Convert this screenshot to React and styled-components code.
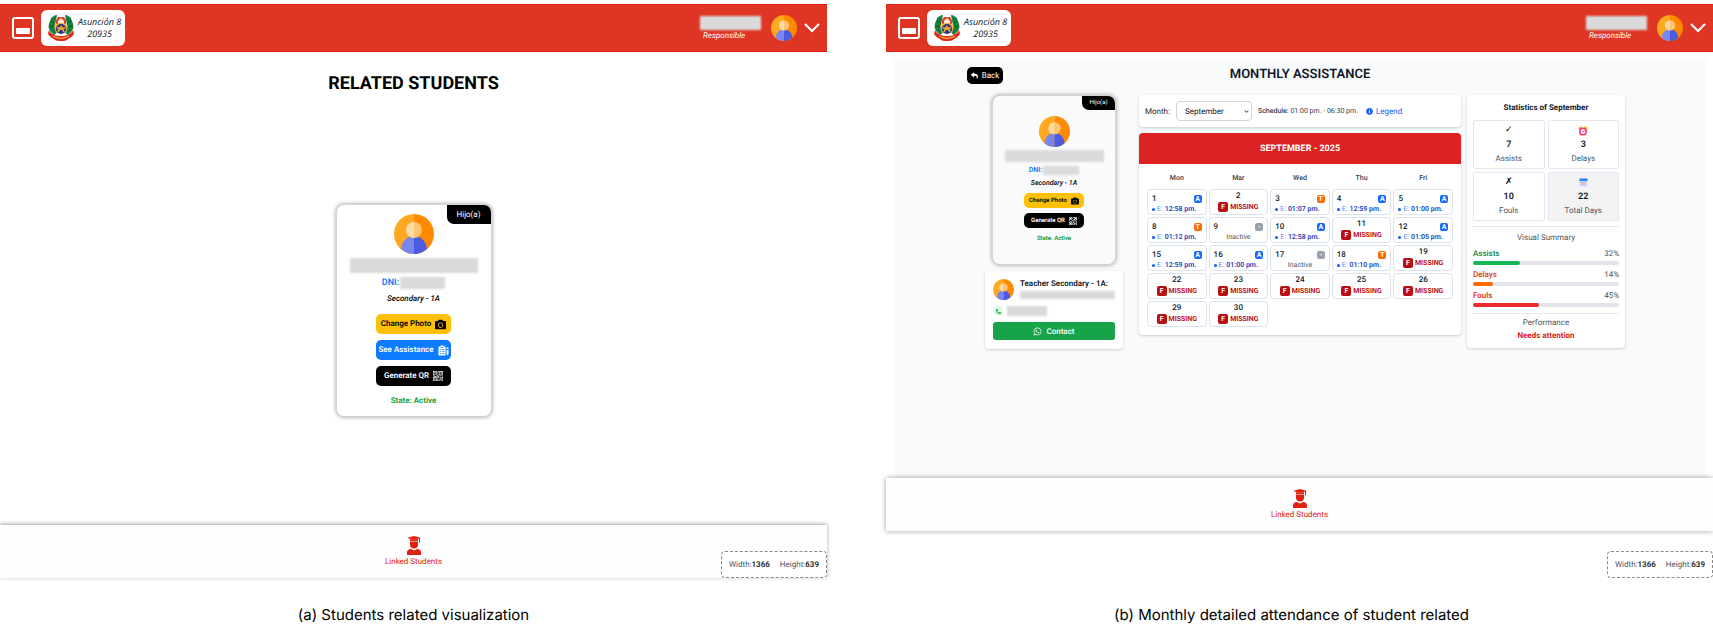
import React, { useState } from "react";
import styled, { createGlobalStyle, css } from "styled-components";
import {
  FaCamera,
  FaChevronDown,
  FaInfoCircle,
  FaPhoneAlt,
  FaReply,
  FaWhatsapp,
} from "react-icons/fa";
import { BsQrCode } from "react-icons/bs";

const week = (...days) => days;

const present = (day, time) => ({ day, kind: "A", time });
const late = (day, time) => ({ day, kind: "T", time });
const missing = (day) => ({ day, kind: "F" });
const inactive = (day) => ({ day, kind: "-" });

const WEEKDAYS = ["Mon", "Mar", "Wed", "Thu", "Fri"];

const WEEKS = [
  week(present(1, "12:58 pm."), missing(2), late(3, "01:07 pm."), present(4, "12:59 pm."), present(5, "01:00 pm.")),
  week(late(8, "01:12 pm."), inactive(9), present(10, "12:58 pm."), missing(11), present(12, "01:05 pm.")),
  week(present(15, "12:59 pm."), present(16, "01:00 pm."), inactive(17), late(18, "01:10 pm."), missing(19)),
  week(missing(22), missing(23), missing(24), missing(25), missing(26)),
  week(missing(29), missing(30)),
];

const SUMMARY = [
  { label: "Assists", value: 32, color: "#15803d", bar: "#16b755" },
  { label: "Delays", value: 14, color: "#d43a10", bar: "#ff6900" },
  { label: "Fouls", value: 45, color: "#dc2626", bar: "#ed2b2f" },
];

const BADGE_COLORS = { A: "#1769ff", T: "#ff6900", F: "#b80f14", "-": "#99a1af" };

const MenuIcon = () => (
  <svg width="22" height="22" viewBox="0 0 22 22" aria-hidden="true">
    <rect x="1" y="1" width="20" height="20" rx="2" fill="none" stroke="#fff" strokeWidth="2" />
    <rect x="4" y="11" width="14" height="6" rx="1" fill="#fff" />
  </svg>
);

const Crest = () => (
  <svg width="26" height="28" viewBox="0 0 26 28" aria-hidden="true">
    <path d="M9 1C6 1 5 3 3 4c0 2-2 4-2 6-1 3 0 5 1 7l4 4 4-3-3-7 1-5z" fill="#16803c" />
    <path d="M17 1c3 0 4 2 6 3 0 2 2 4 2 6 1 3 0 5-1 7l-4 4-4-3 3-7-1-5z" fill="#16803c" />
    <path d="M3 7l4 2M2 12l5 1M23 7l-4 2M24 12l-5 1" stroke="#0b5528" strokeWidth="1" />
    <path d="M8 6l2-3h6l2 3v6H8z" fill="#e2442b" />
    <path d="M10 7l3-3 3 3v5h-6z" fill="#f7ead0" />
    <path d="M6 12c2-4 12-4 14 0l-2 7H8z" fill="#f0b23e" />
    <circle cx="13" cy="15" r="5" fill="#27358a" />
    <path d="M9 14h8M10 18c1-4 5-4 6 0" fill="none" stroke="#f0b23e" strokeWidth="1.3" />
    <circle cx="13" cy="13" r="1.6" fill="#d98c2f" />
    <path d="M1 16c2 4 6 6 12 6s10-2 12-6l1 4c-2 3-4 4-6 5-2 2-4 2-7 2s-5 0-7-2c-2-1-4-2-6-5z" fill="#d92b20" />
    <path d="M5 22c5 3 11 3 16 0" fill="none" stroke="#f3b33d" strokeWidth="1.2" />
  </svg>
);

const AvatarIcon = ({ size }) => (
  <svg width={size} height={size} viewBox="0 0 40 40" role="img" aria-label="Avatar">
    <path d="M20 0a20 20 0 0 0 0 40z" fill="#ffa820" />
    <path d="M20 0a20 20 0 0 1 0 40z" fill="#ff8a00" />
    <path d="M7 35C8 26 14 22 20 22v18c-5 0-9.500-2-13-5z" fill="#7986ee" />
    <path d="M33 35c-1-9-7-13-13-13v18c5 0 9.500-2 13-5z" fill="#4b5ce0" />
    <path d="M20 8a8 8 0 0 0 0 16z" fill="#ffdba3" />
    <path d="M20 8a8 8 0 0 1 0 16z" fill="#ffc574" />
  </svg>
);

const StudentIcon = () => (
  <svg width="14" height="19" viewBox="0 0 28 38" fill="#e0200f" aria-hidden="true">
    <path d="M0 4l14-4 14 4-14 4z" />
    <path d="M6 6l8 2 8-2v4H6zM24 4h2v9h-2z" />
    <path d="M6 11h16v6a8 8 0 0 1-16 0z" />
    <path d="M0 38v-5c0-4 3-7 8-7l6 3 6-3c5 0 8 3 8 7v5z" />
  </svg>
);

const AssistanceIcon = () => (
  <svg width="11" height="11" viewBox="0 0 22 22" aria-hidden="true">
    <path d="M1 3h4V1h6v2h4v18H1z" fill="#fff" />
    <path d="M4 9h2m2 0h5M4 13h2m2 0h5M4 17h2m2 0h5M5 5h6" stroke="#0d7bff" strokeWidth="1.4" />
    <path d="M17 5h4v3h-4zM17 10h4v8l-2 3-2-3z" fill="#fff" />
  </svg>
);

const ChevronIcon = () => (
  <svg width="16" height="10" viewBox="0 0 16 10" aria-hidden="true">
    <path d="M1.500 1.500L8 8l6.500-6.500" fill="none" stroke="#fff" strokeWidth="2" strokeLinecap="round" />
  </svg>
);

const ClockIcon = () => (
  <svg width="10" height="10" viewBox="0 0 20 20" aria-hidden="true">
    <path d="M1 6l1-4 5-1 1 3-5 4zM19 6l-1-4-5-1-1 3 5 4z" fill="#ffad1f" />
    <circle cx="10" cy="11" r="6.500" fill="#ffe9ee" stroke="#f0366b" strokeWidth="3" />
    <path d="M8 10l2 2 3-3" fill="none" stroke="#8a4dd8" strokeWidth="1.400" />
    <path d="M5 17l-1 2M15 17l1 2" stroke="#f0366b" strokeWidth="2" />
  </svg>
);

const CalendarIcon = () => (
  <svg width="9" height="9" viewBox="0 0 18 18" aria-hidden="true">
    <rect x="1" y="1" width="16" height="16" rx="1" fill="#dcd5f6" />
    <path d="M1 1h16v5H1z" fill="#2684f5" />
    <path d="M4 9h2m1.500 0h2M11 9h2M4 12h2m1.500 0h2M11 12h2" stroke="#9a8bd0" strokeWidth="1.500" />
  </svg>
);

const TopBar = () => (
  <Header>
    <IconButton aria-label="Menu">
      <MenuIcon />
    </IconButton>
    <School>
      <Crest />
      <span>
        Asunción 8<br />
        20935
      </span>
    </School>
    <User>
      <Redacted $w={61} $h={14} />
      <em>Responsible</em>
    </User>
    <AvatarIcon size={26} />
    <IconButton aria-label="Account menu">
      <ChevronIcon />
    </IconButton>
  </Header>
);

const BottomBar = ({ raised }) => (
  <BottomNav $raised={raised}>
    <a href="#students">
      <StudentIcon />
      Linked Students
    </a>
  </BottomNav>
);

const WindowSize = () => (
  <SizeBadge>
    <span>Width:<b>1366</b></span>
    <span>Height:<b>639</b></span>
  </SizeBadge>
);

const StudentCard = ({ compact }) => (
  <Profile $compact={compact}>
    <Relation $compact={compact}>Hijo(a)</Relation>
    <AvatarIcon size={compact ? 31 : 40} />
    <Redacted $w={compact ? 99 : 128} $h={compact ? 12 : 15} />
    <Dni $compact={compact}>
      DNI: <Redacted $w={compact ? 36 : 45} $h={compact ? 9 : 12} />
    </Dni>
    <Grade>Secondary - 1A</Grade>
    <Actions $compact={compact}>
      <ActionButton $bg="#ffc107" $color="#000" $compact={compact}>
        Change Photo <FaCamera size={compact ? 8 : 11} />
      </ActionButton>
      {!compact && (
        <ActionButton $bg="#0d7bff" $color="#fff">
          See Assistance <AssistanceIcon />
        </ActionButton>
      )}
      <ActionButton $bg="#000" $color="#fff" $compact={compact}>
        Generate QR <BsQrCode size={compact ? 8 : 10} />
      </ActionButton>
    </Actions>
    <State $compact={compact}>State: Active</State>
  </Profile>
);

const DayCell = ({ day, kind, time }) => {
  if (kind === "F") {
    return (
      <Day>
        <Missed>
          <b>{day}</b>
          <span>
            <Badge $kind="F">F</Badge> MISSING
          </span>
        </Missed>
      </Day>
    );
  }
  return (
    <Day>
      <Attended>
        <DayTop>
          {day}
          <Badge $kind={kind}>{kind}</Badge>
        </DayTop>
        {time ? (
          <Entry>
            <i />
            <span>E:</span>
            {time}
          </Entry>
        ) : (
          <Off>Inactive</Off>
        )}
      </Attended>
    </Day>
  );
};

const Calendar = () => (
  <CalendarCard>
    <h3>SEPTEMBER - 2025</h3>
    <CalendarTable>
      <thead>
        <tr>
          {WEEKDAYS.map((name) => (
            <th key={name}>{name}</th>
          ))}
        </tr>
      </thead>
      <tbody>
        {WEEKS.map((days) => (
          <tr key={days[0].day}>
            {days.map((item) => (
              <DayCell key={item.day} {...item} />
            ))}
          </tr>
        ))}
      </tbody>
    </CalendarTable>
  </CalendarCard>
);

const Statistics = () => (
  <StatsCard>
    <h3>Statistics of September</h3>
    <Tiles>
      <Tile>
        <span>✓</span>
        <b>7</b>
        Assists
      </Tile>
      <Tile>
        <span><ClockIcon /></span>
        <b>3</b>
        Delays
      </Tile>
      <Tile>
        <span>✗</span>
        <b>10</b>
        Fouls
      </Tile>
      <Tile $muted>
        <span><CalendarIcon /></span>
        <b>22</b>
        Total Days
      </Tile>
    </Tiles>
    <Summary>
      <p>Visual Summary</p>
      {SUMMARY.map(({ label, value, color, bar }) => (
        <Meter key={label} $color={color} $bar={bar}>
          <div>
            <b>{label}</b>
            <span>{value}%</span>
          </div>
          <Track>
            <i style={{ width: `${value}%` }} />
          </Track>
        </Meter>
      ))}
    </Summary>
    <Performance>
      Performance
      <b>Needs attention</b>
    </Performance>
  </StatsCard>
);

const App = () => {
  const [month, setMonth] = useState("September");

  return (
    <Page>
      <GlobalStyle />
      <Figure>
        <Screen>
          <TopBar />
          <Related>
            <h1>RELATED STUDENTS</h1>
            <Centered>
              <StudentCard />
            </Centered>
          </Related>
          <BottomBar />
          <WindowSize />
        </Screen>
        <Caption>(a) Students related visualization</Caption>
      </Figure>
      <Figure>
        <Screen $tail>
          <TopBar />
          <Monthly>
            <MonthlyInner>
              <MonthlyHead>
                <BackButton>
                  <FaReply size={7} /> Back
                </BackButton>
                <h2>MONTHLY ASSISTANCE</h2>
              </MonthlyHead>
              <Columns>
                <SideColumn>
                  <StudentCard compact />
                  <Teacher>
                    <TeacherRow>
                      <AvatarIcon size={21} />
                      <div>
                        <b>Teacher Secondary - 1A:</b>
                        <Redacted $h={8} />
                      </div>
                    </TeacherRow>
                    <PhoneRow>
                      <PhoneDot>
                        <FaPhoneAlt size={5} />
                      </PhoneDot>
                      <Redacted $w={40} $h={10} />
                    </PhoneRow>
                    <ContactButton>
                      <FaWhatsapp size={9} /> Contact
                    </ContactButton>
                  </Teacher>
                </SideColumn>
                <MainColumn>
                  <Filters>
                    <label htmlFor="month">Month:</label>
                    <SelectBox>
                      <select id="month" value={month} onChange={(e) => setMonth(e.target.value)}>
                        <option>September</option>
                        <option>October</option>
                      </select>
                      <FaChevronDown size={5} />
                    </SelectBox>
                    <Schedule><b>Schedule:</b> 01:00 pm. - 06:30 pm.</Schedule>
                    <a href="#legend">
                      <FaInfoCircle size={7} /> Legend
                    </a>
                  </Filters>
                  <Calendar />
                </MainColumn>
                <Statistics />
              </Columns>
            </MonthlyInner>
          </Monthly>
          <BottomBar raised />
          <WindowSize />
        </Screen>
        <Caption $inset>(b) Monthly detailed attendance of student related</Caption>
      </Figure>
    </Page>
  );
};

const GlobalStyle = createGlobalStyle`
  *, *::before, *::after {
    box-sizing: border-box;
  }

  body {
    margin: 0;
    background: #fff;
    font-family: Roboto, "Liberation Sans", sans-serif;
    font-size: 8px;
    text-rendering: geometricPrecision;
    color: #101828;
  }

  h1, h2, h3, p, figure {
    margin: 0;
  }

  button, select {
    font: inherit;
    text-rendering: inherit;
    border: none;
    cursor: pointer;
  }

  a {
    text-decoration: none;
  }

  svg {
    display: block;
    flex-shrink: 0;
  }
`;

const card = css`
  background: #fff;
  border-radius: 4px;
  box-shadow: 0 1px 3px rgba(0, 0, 0, 0.18);
`;

const Page = styled.div`
  display: grid;
  grid-template-columns: 1fr 1fr;
  column-gap: 59px;
  min-height: 100vh;
  padding-top: 4px;
`;

const Figure = styled.figure`
  display: flex;
  flex-direction: column;
`;

const Caption = styled.figcaption`
  height: 46px;
  padding: 28px ${({ $inset }) => ($inset ? "16px" : "0")} 0 0;
  font-family: Inter, sans-serif;
  font-size: 15px;
  line-height: 18px;
  text-align: center;
  color: #000;
`;

const Screen = styled.section`
  position: relative;
  flex: 1;
  display: flex;
  flex-direction: column;
  padding-bottom: ${({ $tail }) => ($tail ? "47px" : "0")};
`;

const Header = styled.header`
  display: flex;
  align-items: center;
  height: 48px;
  padding: 0 7px 0 12px;
  background: #de3524;
  border: solid #e01f12;
  border-width: 1px 0;
`;

const IconButton = styled.button`
  padding: 0;
  background: none;
`;

const School = styled.div`
  display: flex;
  align-items: center;
  gap: 4px;
  width: 84px;
  height: 36px;
  margin-left: 7px;
  padding-left: 7px;
  border-radius: 6px;
  background: #fff;

  span {
    font-family: "Open Sans", sans-serif;
    font-size: 9px;
    font-style: italic;
    font-weight: 500;
    line-height: 12px;
    text-align: center;
    white-space: nowrap;
  }
`;

const User = styled.div`
  display: flex;
  flex-direction: column;
  gap: 1px;
  margin: 0 10px 0 auto;
  color: #fff;
  line-height: 10px;

  em {
    padding-left: 3px;
  }

  & ~ ${IconButton} {
    margin-left: 7px;
  }
`;

const Redacted = styled.span`
  display: block;
  width: ${({ $w }) => ($w ? `${$w}px` : "100%")};
  height: ${({ $h }) => $h}px;
  background: #dadada;
  filter: blur(1px);
`;

const BottomNav = styled.nav`
  display: flex;
  justify-content: center;
  height: 53px;
  padding-top: 11px;
  background: #fefefe;
  box-shadow: ${({ $raised }) =>
    $raised ? "0 0 5px rgba(0, 0, 0, 0.4)" : "0 -1px 4px rgba(0, 0, 0, 0.35)"};

  a {
    display: flex;
    flex-direction: column;
    align-items: center;
    gap: 2px;
    line-height: 10px;
    color: #e0200f;
  }
`;

const SizeBadge = styled.div`
  position: absolute;
  right: 0;
  bottom: 0;
  display: flex;
  align-items: center;
  justify-content: space-between;
  width: 106px;
  height: 27px;
  padding: 0 7px;
  border: 1px dashed #8a8a8a;
  border-radius: 4px;
  background: #fff;
  color: #4a5565;

  b {
    color: #333;
  }
`;

const Related = styled.main`
  flex: 1;
  display: flex;
  flex-direction: column;
  padding-top: 20px;

  h1 {
    font-size: 18px;
    font-weight: 700;
    line-height: 24px;
    text-align: center;
    color: #000;
  }
`;

const Centered = styled.div`
  flex: 1;
  display: flex;
  align-items: center;
  justify-content: center;
`;

const Profile = styled.article`
  position: relative;
  display: flex;
  flex-direction: column;
  align-items: center;
  width: ${({ $compact }) => ($compact ? "124px" : "156px")};
  padding: ${({ $compact }) => ($compact ? "20px 0" : "9px 0")};
  border: 1px solid #d5d5d5;
  border-radius: 8px;
  background: ${({ $compact }) => ($compact ? "#f9fafc" : "#fff")};
  box-shadow: 0 0 4px rgba(0, 0, 0, 0.4);
  font-size: ${({ $compact }) => ($compact ? "7px" : "8px")};
  line-height: ${({ $compact }) => ($compact ? "10px" : "12px")};
  gap: ${({ $compact }) => ($compact ? "3px" : "4px")};
`;

const Relation = styled.span`
  position: absolute;
  top: 0;
  right: 0;
  width: ${({ $compact }) => ($compact ? "33px" : "44px")};
  line-height: ${({ $compact }) => ($compact ? "14px" : "19px")};
  border-radius: 0 7px 0 7px;
  background: #000;
  color: #fff;
  font-size: ${({ $compact }) => ($compact ? "6px" : "8px")};
  text-align: center;
`;

const Dni = styled.div`
  display: flex;
  align-items: center;
  gap: 1px;
  color: #0d7bff;
  font-size: ${({ $compact }) => ($compact ? "7px" : "9px")};
  font-weight: 600;
`;

const Grade = styled.em`
  color: #000;
  font-weight: 500;
`;

const Actions = styled.div`
  display: flex;
  flex-direction: column;
  gap: ${({ $compact }) => ($compact ? "5px" : "6px")};
  margin: ${({ $compact }) => ($compact ? "2px 0 3px" : "5px 0")};
`;

const ActionButton = styled.button`
  display: flex;
  align-items: center;
  justify-content: center;
  gap: 4px;
  width: ${({ $compact }) => ($compact ? "60px" : "75px")};
  height: ${({ $compact }) => ($compact ? "15px" : "20px")};
  padding: 0;
  border-radius: 5px;
  background: ${({ $bg }) => $bg};
  color: ${({ $color }) => $color};
  font-size: ${({ $compact }) => ($compact ? "6px" : "8px")};
  font-weight: 600;
  white-space: nowrap;
`;

const State = styled.div`
  color: #0a9a34;
  font-size: ${({ $compact }) => ($compact ? "6px" : "8px")};
  font-weight: 600;
`;

const Monthly = styled.main`
  flex: 1;
  margin: 8px 7px 0 8px;
  padding: 6px 0;
  background: #f9fafc;
`;

const MonthlyInner = styled.div`
  max-width: 666px;
  margin: 0 auto;
`;

const MonthlyHead = styled.div`
  display: grid;
  grid-template-columns: 1fr auto 1fr;
  align-items: center;
  margin-bottom: 11px;

  h2 {
    font-size: 13px;
    font-weight: 600;
    line-height: 18px;
  }
`;

const BackButton = styled.button`
  display: flex;
  align-items: center;
  justify-content: center;
  gap: 4px;
  width: 36px;
  height: 17px;
  padding: 0;
  border-radius: 5px;
  background: #000;
  color: #fff;
`;

const Columns = styled.div`
  display: grid;
  grid-template-columns: minmax(0, 154fr) minmax(0, 328fr) minmax(0, 158fr);
  align-items: start;
  padding: 0 8px 0 18px;
`;

const SideColumn = styled.div`
  display: flex;
  flex-direction: column;
  align-items: center;
  gap: 6px;
  margin-right: 16px;
`;

const Teacher = styled.section`
  ${card}
  width: 100%;
  padding: 8px 8px 9px;
`;

const TeacherRow = styled.div`
  display: flex;
  gap: 6px;

  div {
    flex: 1;
    line-height: 10px;
    white-space: nowrap;
  }

  b {
    display: block;
    margin-bottom: 2px;
    font-weight: 600;
  }
`;

const PhoneRow = styled.div`
  display: flex;
  align-items: center;
  gap: 4px;
  margin: 6px 0;
`;

const PhoneDot = styled.span`
  display: grid;
  place-items: center;
  width: 10px;
  height: 10px;
  border-radius: 50%;
  background: #d8fbe3;
  color: #169c46;
`;

const ContactButton = styled.button`
  display: flex;
  align-items: center;
  justify-content: center;
  gap: 4px;
  width: 100%;
  height: 18px;
  border-radius: 3px;
  background: #16a34a;
  color: #fff;
  font-weight: 500;
`;

const MainColumn = styled.div`
  display: flex;
  flex-direction: column;
  gap: 6px;
  margin-right: 6px;
`;

const Filters = styled.div`
  ${card}
  display: flex;
  align-items: center;
  gap: 6px;
  height: 32px;
  padding: 0 6px;
  color: #364153;
  white-space: nowrap;

  label {
    color: #1e2939;
  }

  a {
    display: flex;
    align-items: center;
    gap: 3px;
    color: #155dfc;
  }
`;

const Schedule = styled.span`
  font-size: 7px;
  margin-right: 2px;

  b {
    font-weight: 500;
  }
`;

const SelectBox = styled.div`
  position: relative;

  select {
    appearance: none;
    width: 76px;
    height: 20px;
    padding: 0 8px;
    border: 1px solid #d1d5dc;
    border-radius: 4px;
    background: #fff;
    color: #101828;
  }

  svg {
    position: absolute;
    top: 8px;
    right: 3px;
    pointer-events: none;
  }
`;

const CalendarCard = styled.section`
  ${card}
  overflow: hidden;

  h3 {
    height: 31px;
    background: #dc2222;
    color: #fff;
    font-size: 9px;
    font-weight: 700;
    line-height: 32px;
    text-align: center;
  }
`;

const CalendarTable = styled.table`
  width: 100%;
  padding: 2px 6px 6px;
  table-layout: fixed;
  border-spacing: 2px;

  th {
    height: 19px;
    padding: 0;
    font-size: 7px;
    font-weight: 500;
    color: #364153;
  }
`;

const Day = styled.td`
  height: 26px;
  padding: 0;
  border: 1px solid #dbe3ef;
  border-radius: 4px;
  vertical-align: top;
`;

const Badge = styled.span`
  display: inline-grid;
  place-items: center;
  width: ${({ $kind }) => ($kind === "F" ? "10px" : "8px")};
  height: ${({ $kind }) => ($kind === "F" ? "10px" : "8px")};
  border-radius: 2px;
  background: ${({ $kind }) => BADGE_COLORS[$kind]};
  color: #fff;
  font-size: 7px;
  font-weight: 700;
  line-height: 8px;
`;

const Missed = styled.div`
  display: flex;
  flex-direction: column;
  align-items: center;
  gap: 2px;
  padding-top: 2px;
  line-height: 8px;

  b {
    font-weight: 500;
  }

  span {
    display: flex;
    align-items: center;
    justify-content: center;
    gap: 2px;
    color: #c10007;
    font-size: 7px;
    font-weight: 600;
  }

  ${Badge} {
    color: #fff;
  }
`;

const Attended = styled.div`
  display: flex;
  flex-direction: column;
  gap: 2px;
  padding: 5px 4px 0;
`;

const DayTop = styled.div`
  display: flex;
  justify-content: space-between;
  font-weight: 500;
  line-height: 8px;
`;

const Entry = styled.div`
  display: flex;
  align-items: center;
  gap: 2px;
  color: #1c3fb8;
  font-size: 7px;
  font-weight: 600;
  line-height: 8px;
  white-space: nowrap;

  i {
    width: 3px;
    height: 3px;
    border-radius: 50%;
    background: #155dfc;
  }

  span {
    color: #5b8dff;
    font-weight: 400;
  }
`;

const Off = styled.div`
  color: #4a5565;
  font-size: 7px;
  line-height: 8px;
  text-align: center;
`;

const StatsCard = styled.aside`
  ${card}
  padding: 0 6px 5px;
  color: #4a5565;
  text-align: center;

  h3 {
    font-size: 8px;
    font-weight: 700;
    line-height: 25px;
    color: #101828;
  }
`;

const Tiles = styled.div`
  display: grid;
  grid-template-columns: 1fr 1fr;
  gap: 3px;
`;

const Tile = styled.div`
  display: flex;
  flex-direction: column;
  align-items: center;
  height: 49px;
  padding-top: 3px;
  border: 1px solid #e2e8f0;
  border-radius: 2px;
  background: ${({ $muted }) => ($muted ? "#f3f3f4" : "#fff")};
  line-height: 11px;

  span {
    display: flex;
    align-items: center;
    height: 13px;
    color: #000;
    font-size: 9px;
  }

  b {
    color: #101828;
    font-size: 9px;
    font-weight: 600;
    line-height: 16px;
  }
`;

const Summary = styled.div`
  display: flex;
  flex-direction: column;
  gap: 4px;
  margin-top: 5px;
  padding: 5px 0 6px;
  border: solid #e5e7eb;
  border-width: 1px 0;
  line-height: 12px;
`;

const Meter = styled.div`
  display: flex;
  flex-direction: column;
  gap: 1px;

  div:first-child {
    display: flex;
    justify-content: space-between;
  }

  b {
    color: ${({ $color }) => $color};
    font-weight: 500;
  }

  i {
    background: ${({ $bar }) => $bar};
  }
`;

const Track = styled.div`
  height: 4px;
  border-radius: 2px;
  background: #e1e4e9;

  i {
    display: block;
    height: 100%;
    border-radius: 2px;
  }
`;

const Performance = styled.div`
  padding-top: 3px;
  line-height: 12px;

  b {
    display: block;
    color: #dc1c1c;
    font-weight: 700;
    line-height: 14px;
  }
`;

export default App;
